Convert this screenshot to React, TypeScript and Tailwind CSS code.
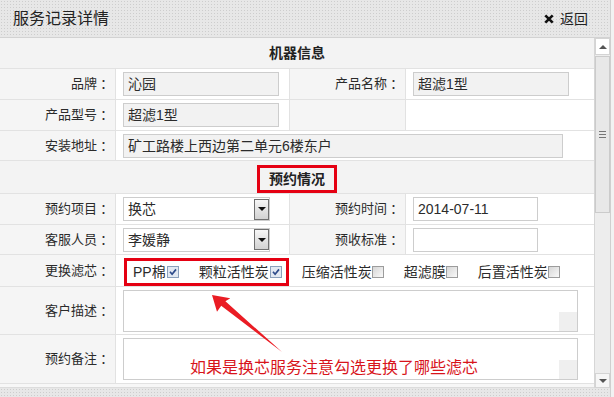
import React from "react";

const dotted =
  "bg-[#e7e7e7] bg-[radial-gradient(#cdcdcd_0.7px,transparent_0.9px)] bg-[length:3px_3px]";

function Label({ text }: { text?: string }) {
  return (
    <div className="flex items-center justify-end bg-[#f5f5f5] pr-[5px] text-[13px] leading-[18px] text-[#2b2b2b] border-b border-r border-[#e2e2e2]">
      {text ? (
        <>
          <span>{text}</span>
          <span className="inline-block w-[13px] text-center font-['Noto_Sans_CJK_TC',sans-serif]">：</span>
        </>
      ) : null}
    </div>
  );
}

function Value({
  children,
  cls,
}: {
  children?: React.ReactNode;
  cls: string;
}) {
  return (
    <div className={`flex items-center pl-[7px] bg-white border-b border-[#e2e2e2] ${cls}`}>
      {children}
    </div>
  );
}

function Input({
  value,
  w,
  ro,
}: {
  value?: string;
  w: string;
  ro?: boolean;
}) {
  return (
    <div
      className={`${w} h-[24px] flex items-center border border-[#cdcdcd] pl-[4px] text-[14px] leading-[20px] text-[#2b2b2b] ${
        ro ? "bg-[#f2f2f2]" : "bg-white"
      }`}
    >
      {value}
    </div>
  );
}

function Select({ value }: { value: string }) {
  return (
    <div className="w-[147px] h-[24px] flex items-center border border-[#cdcdcd] bg-white">
      <span className="flex-1 pl-[4px] text-[14px] leading-[20px] text-[#2b2b2b]">{value}</span>
      <span className="w-[15px] h-[21px] flex items-center justify-center border border-[#707070] bg-linear-to-b from-[#f7f7f7] to-[#d2d2d2]">
        <span className="w-0 h-0 border-l-[4px] border-r-[4px] border-t-[4px] border-l-transparent border-r-transparent border-t-[#111]" />
      </span>
    </div>
  );
}

function Cb({ checked }: { checked?: boolean }) {
  return checked ? (
    <span className="ml-[1px] inline-flex w-[12px] h-[12px] items-center justify-center border border-[#8aa0bb] bg-[#e2e9f2]">
      <svg width="8" height="8" viewBox="0 0 8 8">
        <path d="M1 3.8 L3.1 6.2 L7 1.4" stroke="#2d4b8a" strokeWidth="1.7" fill="none" />
      </svg>
    </span>
  ) : (
    <span className="ml-0 inline-block w-[12px] h-[12px] border border-[#9c9c9c] bg-linear-to-br from-[#d6d6d6] to-[#f9f9f9]" />
  );
}

function Item({ text, checked }: { text: string; checked?: boolean }) {
  return (
    <span className="flex items-center text-[14px] leading-[20px] text-[#2b2b2b]">
      {text}
      <Cb checked={checked} />
    </span>
  );
}

function TextArea() {
  return (
    <div className="relative w-[455px] h-[42px] border border-[#cdcdcd] bg-white">
      <div className="absolute right-0 bottom-0 w-[18px] h-[19px] bg-[#efefef]" />
    </div>
  );
}

function Scrollbar() {
  return (
    <div className="w-[15px] flex flex-col bg-[#ededed]">
      <div className="h-[17px] flex items-center justify-center bg-white border border-[#d4d4d4]">
        <span className="w-0 h-0 border-l-[4px] border-r-[4px] border-b-[4px] border-l-transparent border-r-transparent border-b-[#555]" />
      </div>
      <div className="h-[157px] mt-[1px] flex flex-col items-center justify-center gap-[2px] bg-[#e8e8e8] border border-[#cbcbcb]">
        <span className="w-[7px] h-[1px] bg-[#777]" />
        <span className="w-[7px] h-[1px] bg-[#777]" />
        <span className="w-[7px] h-[1px] bg-[#777]" />
      </div>
      <div className="flex-1" />
      <div className="h-[15px] flex items-center justify-center bg-[#f6f6f6] border border-[#d4d4d4]">
        <span className="w-0 h-0 border-l-[4px] border-r-[4px] border-t-[4px] border-l-transparent border-r-transparent border-t-[#555]" />
      </div>
    </div>
  );
}

export default function App() {
  return (
    <div className="relative flex w-[614px] h-[397px] overflow-hidden bg-[#efefef] font-['Liberation_Sans','Noto_Sans_CJK_SC',sans-serif] text-[#2b2b2b]">
      <div className="flex flex-col w-[610px]">
        <header
          className={`h-[38px] flex items-center justify-between border-b border-[#d2d2d2] pl-[13px] pr-[22px] ${dotted}`}
        >
          <h1 className="text-[16px] leading-[20px] font-normal text-[#222]">服务记录详情</h1>
          <div className="flex items-center gap-[6px] text-[14px] leading-[18px] text-[#222]">
            <svg width="10" height="10" viewBox="0 0 10 10">
              <path d="M1.3 1.3L8.7 8.7M8.7 1.3L1.3 8.7" stroke="#111" strokeWidth="2.6" />
            </svg>
            <span>返回</span>
          </div>
        </header>

        <div className="flex h-[350px]">
          <div className="w-[595px] flex flex-col border-r border-[#d6d6d6]">
            <div className="grid grid-cols-[116px_174px_116px_188px] grid-rows-[31px_31px_31px_30px_33px_31px_30px_32px_48px_49px]">
              <div className="col-span-4 flex items-center justify-center bg-[#f3f3f3] border-b border-[#e2e2e2] text-[14px] font-bold leading-[20px] text-[#222]">
                机器信息
              </div>

              <Label text="品牌" />
              <Value cls="border-r">
                <Input w="w-[156px]" value="沁园" ro />
              </Value>
              <Label text="产品名称" />
              <Value cls="">
                <Input w="w-[156px]" value="超滤1型" ro />
              </Value>

              <Label text="产品型号" />
              <Value cls="border-r">
                <Input w="w-[156px]" value="超滤1型" ro />
              </Value>
              <Label />
              <Value cls="" />

              <Label text="安装地址" />
              <Value cls="col-span-3">
                <Input w="w-[440px]" value="矿工路楼上西边第二单元6楼东户" ro />
              </Value>

              <div className="col-span-4 flex items-start justify-center pt-[4px] bg-[#f3f3f3] border-b border-[#e2e2e2]">
                <div className="h-[28px] flex items-center border-[3px] border-[#e50012] px-[9px] text-[14px] font-bold leading-[20px] text-[#222]">
                  预约情况
                </div>
              </div>

              <Label text="预约项目" />
              <Value cls="border-r">
                <Select value="换芯" />
              </Value>
              <Label text="预约时间" />
              <Value cls="">
                <Input w="w-[125px]" value="2014-07-11" />
              </Value>

              <Label text="客服人员" />
              <Value cls="border-r">
                <Select value="李媛静" />
              </Value>
              <Label text="预收标准" />
              <Value cls="">
                <Input w="w-[125px]" />
              </Value>

              <Label text="更换滤芯" />
              <div className="col-span-3 flex items-start pt-[3px] pl-[8px] bg-white border-b border-[#e2e2e2]">
                <div className="h-[28px] flex items-center gap-[20px] border-[3px] border-[#e50012] pl-[6px] pr-[4px]">
                  <Item text="PP棉" checked />
                  <Item text="颗粒活性炭" checked />
                </div>
                <div className="h-[28px] flex items-center gap-[20px] ml-[13px]">
                  <Item text="压缩活性炭" />
                  <Item text="超滤膜" />
                  <Item text="后置活性炭" />
                </div>
              </div>

              <Label text="客户描述" />
              <Value cls="col-span-3">
                <TextArea />
              </Value>

              <Label text="预约备注" />
              <Value cls="col-span-3">
                <TextArea />
              </Value>
            </div>
            <div className="h-[4px] bg-[#f7f7f7] border-b border-[#dcdcdc]" />
          </div>
          <Scrollbar />
        </div>

        <div className={`flex-1 ${dotted}`} />
      </div>
      <div className="w-[4px] border-l border-[#cfcfcf] bg-[#f2f2f2]" />

      <svg
        className="absolute left-0 top-0 pointer-events-none"
        width="614"
        height="397"
        viewBox="0 0 614 397"
      >
        <polygon
          points="212,295 217,311.8 221.2,305.8 282,352 225.4,301.2 230.3,298.2"
          fill="#ea1c24"
        />
      </svg>
      <div className="absolute left-[190px] top-[356px] text-[16px] leading-[20px] text-[#d8141b] font-['Noto_Sans_CJK_SC',sans-serif]">
        如果是换芯服务注意勾选更换了哪些滤芯
      </div>
    </div>
  );
}
